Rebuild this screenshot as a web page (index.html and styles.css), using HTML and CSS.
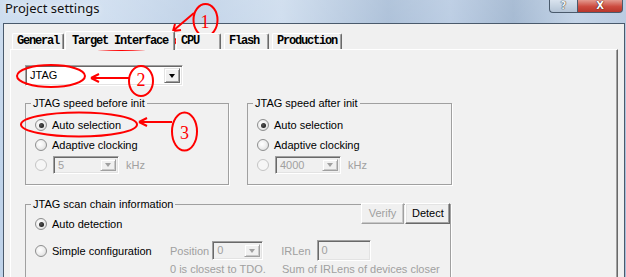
FILE: index.html
```html
<!DOCTYPE html>
<html lang="en">
<head>
    <meta charset="UTF-8">
    <meta name="viewport" content="width=device-width, initial-scale=1.0">
    <title>Project settings</title>
    <link rel="stylesheet" href="styles.css">
</head>
<body>
    <div class="window">
        <header class="titlebar">
            <span class="title">Project settings</span>
            <div class="caption">
                <span class="cap-btn help">?</span>
                <span class="cap-btn close">X</span>
            </div>
        </header>
        <div class="frame">
            <nav class="tabs">
                <span class="tab">General</span>
                <span class="tab active">Target Interface</span>
                <span class="tab">CPU</span>
                <span class="tab">Flash</span>
                <span class="tab">Production</span>
            </nav>
            <section class="panel">
                <div class="combo iface">
                    <span class="value">JTAG</span>
                    <span class="drop"></span>
                </div>

                <div class="speed-row">
                    <fieldset class="group speed">
                        <legend>JTAG speed before init</legend>
                        <div class="radio"><span class="dot checked"></span>Auto selection</div>
                        <div class="radio"><span class="dot"></span>Adaptive clocking</div>
                        <div class="radio">
                            <span class="dot off"></span>
                            <div class="combo small off"><span class="value">5</span><span class="drop"></span></div>
                            <span class="muted unit">kHz</span>
                        </div>
                    </fieldset>
                    <fieldset class="group speed">
                        <legend>JTAG speed after init</legend>
                        <div class="radio"><span class="dot checked"></span>Auto selection</div>
                        <div class="radio"><span class="dot"></span>Adaptive clocking</div>
                        <div class="radio">
                            <span class="dot off"></span>
                            <div class="combo small off"><span class="value">4000</span><span class="drop"></span></div>
                            <span class="muted unit">kHz</span>
                        </div>
                    </fieldset>
                </div>

                <div class="scan">
                    <fieldset class="group chain">
                        <legend>JTAG scan chain information</legend>
                        <div class="radio short"><span class="dot checked"></span>Auto detection</div>
                        <div class="chain-row">
                            <div class="radio simple"><span class="dot"></span>Simple configuration</div>
                            <span class="muted">Position</span>
                            <div class="combo pos off"><span class="value">0</span><span class="drop"></span></div>
                            <span class="muted irlen">IRLen</span>
                            <span class="edit off">0</span>
                        </div>
                        <div class="hints">
                            <span class="muted first">0 is closest to TDO.</span>
                            <span class="muted">Sum of IRLens of devices closer</span>
                        </div>
                    </fieldset>
                    <div class="scan-buttons">
                        <span class="btn disabled">Verify</span>
                        <span class="btn">Detect</span>
                    </div>
                </div>
            </section>
        </div>
    </div>

    <svg class="marks" width="626" height="277" viewBox="0 0 626 277">
        <g fill="none" stroke="#f00" stroke-width="2">
            <ellipse cx="121.5" cy="41" rx="55" ry="9"/>
            <ellipse cx="205.5" cy="20" rx="12" ry="16"/>
            <path d="M194 13 L174 30 M173 31 L175 24 M173 31 L181 30"/>

            <ellipse cx="51" cy="76" rx="34" ry="11"/>
            <ellipse cx="141" cy="81" rx="12" ry="15"/>
            <path d="M129 78 H92 M91 78 L99 74 M91 78 L99 82"/>

            <ellipse cx="79" cy="124.5" rx="58" ry="12"/>
            <ellipse cx="184.5" cy="131.5" rx="12.5" ry="19"/>
            <path d="M172 122 H140 M139 122 L147 118 M139 122 L147 126"/>
        </g>
        <g class="mark-num" fill="#f00">
            <text x="205" y="28">1</text>
            <text x="141" y="86">2</text>
            <text x="184.5" y="139">3</text>
        </g>
    </svg>
</body>
</html>
```

FILE: styles.css
```css
* {
    box-sizing: border-box;
}
body {
    margin: 0;
    width: 626px;
    height: 277px;
    overflow: hidden;
    position: relative;
    font-family: 'Liberation Sans', Arial, sans-serif;
    font-size: 11px;
    color: #000;
    background:
        linear-gradient(180deg, rgba(255, 255, 255, 0.25), rgba(255, 255, 255, 0) 70%),
        linear-gradient(90deg, #bfd3ea 0%, #c6d8ed 15%, #b2c8e2 30%, #c3d5ea 45%, #98b1cf 62%, #aac0dc 72%, #8da7c6 82%, #b3c8e1 92%, #a6bdd9 100%);
}
.window {
    height: 100%;
    display: flex;
    flex-direction: column;
}

/* title bar */
.titlebar {
    height: 23px;
    flex: none;
    display: flex;
    justify-content: space-between;
    align-items: flex-start;
    padding: 0 3px 0 5px;
}
.title {
    font-family: 'Noto Sans', 'Open Sans', sans-serif;
    font-size: 13px;
    line-height: 17px;
    color: #111;
    text-shadow: 0 0 6px rgba(255, 255, 255, 0.9);
}
.caption {
    display: flex;
}
.cap-btn {
    height: 13px;
    display: flex;
    justify-content: center;
    border: 1px solid #4a5a6c;
    border-top: none;
    font-family: 'DejaVu Sans', sans-serif;
    font-weight: bold;
    font-size: 10px;
    line-height: 11px;
}
.help {
    width: 28px;
    border-right: none;
    border-radius: 0 0 0 4px;
    background: linear-gradient(#d9e3ee, #b4c4d6);
    color: #eef2f6;
    text-shadow: 0 0 1px #333, 0 0 1px #333;
}
.close {
    width: 46px;
    border-radius: 0 0 4px 0;
    background: linear-gradient(#e39a8f, #cc4b3f 55%, #b8362b);
    color: #fff;
    text-shadow: 0 0 1px #3a1010, 0 0 1px #3a1010;
}

/* client frame */
.frame {
    flex: 1;
    display: flex;
    flex-direction: column;
    margin: 0 1px 0 3px;
    border: 1px solid #4a5a6c;
    border-bottom: none;
    background: #f0f0f0;
    min-height: 0;
}
.tabs {
    display: flex;
    align-items: flex-end;
    gap: 3px;
    height: 18px;
    margin: 7px 0 0 8px;
    position: relative;
    z-index: 1;
}
.tab {
    min-width: 45px;
    height: 16px;
    padding: 0 4px;
    border: 1px solid #fff;
    border-right-color: #696969;
    border-bottom: none;
    border-radius: 2px 2px 0 0;
    box-shadow: inset -1px 0 #a0a0a0;
    background: #f0f0f0;
    font-family: 'Liberation Mono', 'Courier New', monospace;
    font-weight: bold;
    font-size: 12px;
    letter-spacing: -1.2px;
    line-height: 15px;
    white-space: nowrap;
}
.tab.active {
    position: relative;
    height: 19px;
    margin: 0 -2px -1px;
    padding: 2px 6px 0;
}

.panel {
    flex: 1;
    margin: 0 6px;
    padding: 15px 0 0 14px;
    border: 1px solid #fff;
    border-right-color: #696969;
    border-bottom: none;
    box-shadow: inset -1px 0 #a0a0a0;
    background: #f1f1f1;
    overflow: hidden;
}

/* combo boxes and edits */
.combo {
    display: flex;
    height: 21px;
    padding: 2px;
    background: #fff;
    border: 1px solid;
    border-color: #a0a0a0 #fff #fff #a0a0a0;
    box-shadow: inset 1px 1px #696969, inset -1px -1px #e3e3e3;
}
.combo .value {
    flex: 1;
    padding-left: 2px;
    line-height: 15px;
}
.drop {
    width: 16px;
    display: flex;
    align-items: center;
    justify-content: center;
    background: #f0f0f0;
    border: 1px solid;
    border-color: #e3e3e3 #696969 #696969 #e3e3e3;
    box-shadow: inset 1px 1px #fff, inset -1px -1px #a0a0a0;
}
.drop::after {
    content: "";
    border-left: 3.5px solid transparent;
    border-right: 3.5px solid transparent;
    border-top: 4px solid #000;
}
.combo.off {
    background: #f0f0f0;
    color: #a0a0a0;
}
.combo.off .drop::after {
    border-top-color: #a0a0a0;
}
.combo.off .drop {
    border-color: #f0f0f0 #a0a0a0 #a0a0a0 #f0f0f0;
    box-shadow: inset 1px 1px #fff, inset -1px -1px #c8c8c8;
}
.iface {
    width: 158px;
}
.small {
    width: 66px;
    height: 18px;
    margin-left: 1px;
}
.small .value {
    line-height: 12px;
}
.pos {
    width: 51px;
    height: 19px;
    margin-left: 3px;
}
.pos .value {
    line-height: 13px;
}
.edit {
    width: 54px;
    height: 21px;
    margin-left: 6px;
    padding: 2px 0 0 4px;
    border: 1px solid;
    border-color: #a0a0a0 #fff #fff #a0a0a0;
    box-shadow: inset 1px 1px #696969, inset -1px -1px #e3e3e3;
    background: #f0f0f0;
    color: #a0a0a0;
    line-height: 15px;
}

/* group boxes */
.speed-row {
    display: flex;
    gap: 18px;
    margin-top: 11px;
}
.group {
    margin: 0;
    min-width: 0;
    padding: 5px 8px 9px;
    border: 1px solid #a0a0a0;
    box-shadow: 1px 1px 0 #fff;
}
.group legend {
    padding: 0 2px;
    margin-left: -3px;
    line-height: 13px;
}
.speed {
    width: 204px;
}
.speed + .speed {
    width: 205px;
}

.radio {
    display: flex;
    align-items: center;
    gap: 5px;
    height: 20px;
    white-space: nowrap;
}
.radio.short {
    height: 16px;
}
.dot {
    width: 12px;
    height: 12px;
    margin-left: 1px;
    flex: none;
    display: grid;
    place-items: center;
    border: 1px solid #8e8f8f;
    border-radius: 50%;
    background: radial-gradient(circle at 40% 40%, #fff 0%, #f0f0f0 45%, #d4d4d4 100%);
}
.dot.checked::after {
    content: "";
    width: 5px;
    height: 5px;
    border-radius: 50%;
    background: radial-gradient(circle at 40% 40%, #555, #0d0d0d);
}
.dot.off {
    border-color: #c4c4c4;
    background: #f6f6f6;
}
.muted {
    color: #a0a0a0;
}
.unit {
    margin-left: 2px;
}

.scan {
    position: relative;
    width: 426px;
    margin-top: 13px;
}
.chain {
    width: 426px;
}
.chain-row {
    display: flex;
    align-items: center;
    height: 21px;
    margin-top: 8px;
}
.radio.simple {
    width: 136px;
}
.irlen {
    margin-left: 18px;
}
.hints {
    display: flex;
    margin-top: 2px;
    padding-left: 136px;
    line-height: 13px;
    white-space: nowrap;
}
.hints .first {
    width: 112px;
}
.scan-buttons {
    position: absolute;
    top: 5px;
    right: 1px;
    display: flex;
    gap: 1px;
}
.btn {
    height: 21px;
    padding: 0 6px;
    line-height: 19px;
    text-align: center;
    background: #f0f0f0;
    border: 1px solid;
    border-color: #fff #696969 #696969 #fff;
    box-shadow: inset -1px -1px #a0a0a0, inset 1px 1px #e3e3e3;
}
.btn.disabled {
    width: 43px;
    color: #a0a0a0;
    border-color: #fff #a0a0a0 #a0a0a0 #fff;
    box-shadow: inset -1px -1px #c8c8c8;
}
.btn:last-child {
    width: 45px;
}

/* red annotations drawn over the dialog */
.marks {
    position: absolute;
    top: 0;
    left: 0;
    pointer-events: none;
}
.mark-num {
    font-family: 'Liberation Serif', serif;
    font-size: 18px;
    text-anchor: middle;
}
```
